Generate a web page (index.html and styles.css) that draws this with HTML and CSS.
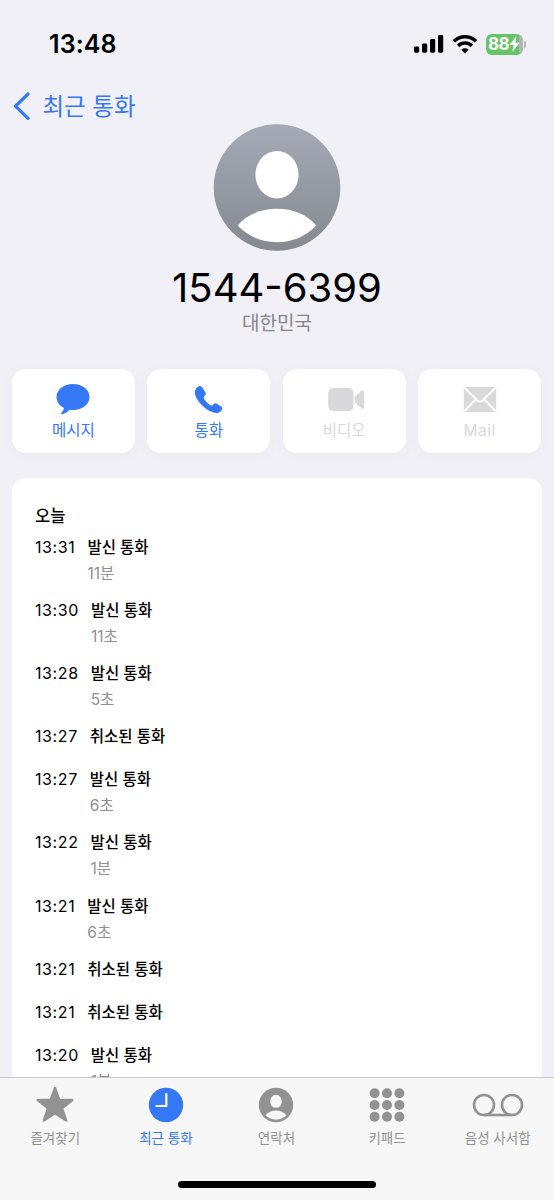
FILE: index.html
```html
<!DOCTYPE html>
<html lang="ko">
<head>
<meta charset="utf-8">
<title>최근 통화</title>
<link rel="stylesheet" href="styles.css">
</head>
<body>
<div class="phone">
  <header class="status">
    <span class="clock">13:48</span>
    <div class="status-icons">
      <svg class="signal" width="30" height="20" viewBox="0 0 30 20"><rect x="0" y="12.5" width="5.2" height="6.2" rx="1.4"/><rect x="8" y="9.5" width="5.2" height="9.2" rx="1.4"/><rect x="16" y="5" width="5.2" height="13.7" rx="1.4"/><rect x="24" y="1" width="5.2" height="17.7" rx="1.4"/></svg>
      <svg class="wifi" width="26" height="20" viewBox="0 0 26 20"><g fill="none" stroke="#000" stroke-width="3.5"><path d="M2 7.200a15.800 15.800 0 0 1 22 0"/><path d="M6.200 11.900a9.700 9.700 0 0 1 13.600 0"/></g><path d="M9.300 15.700a5.500 5.500 0 0 1 7.400 0L13 19.400z"/></svg>
      <div class="battery"><span>88</span><svg width="11" height="16" viewBox="0 0 11 16"><path d="M7.500 0 .3 9h4.500L3.200 16 10.800 6.700H6.300z" fill="#fff"/></svg></div><i class="battery-tip"></i>
    </div>
  </header>
  <nav class="back">
    <svg width="18" height="30" viewBox="0 0 18 30"><path d="M16 3 3.500 15.200 16 27.400" fill="none" stroke="#3478f6" stroke-width="3.200" stroke-linecap="round" stroke-linejoin="round"/></svg>
    <span>최근 통화</span>
  </nav>
  <section class="contact">
    <svg width="128" height="128" viewBox="0 0 128 128"><defs><linearGradient id="avatar" x1="0" y1="0" x2="0" y2="1"><stop offset="0" stop-color="#a5aab7"/><stop offset="1" stop-color="#858990"/></linearGradient></defs><circle cx="64" cy="64.500" r="63.300" fill="url(#avatar)"/><ellipse cx="64" cy="51.700" rx="21.600" ry="23.800" fill="#fff"/><path d="M24.800 102.500C34 91.500 48 85.800 64 85.800s30 5.700 39.200 16.700C93 113.500 79 119.200 64 119.200S35 113.500 24.800 102.500z" fill="#fff"/></svg>
    <h1>1544-6399</h1>
    <p>대한민국</p>
  </section>
  <section class="actions">
    <div class="action"><svg width="34" height="32" viewBox="0 0 34 32"><path d="M17 1C7.500 1 .5 6.800.5 14c0 4.900 3 8.800 7.500 11-.4 2-1.400 3.500-2.700 5-.6.8-.2 1.400.8 1.200 3.300-.6 5.600-2.300 7.500-4.500 1 .2 2.300.3 3.400.3 9.500 0 16.500-5.600 16.500-13S26.500 1 17 1z" fill="#3478f6"/></svg><span>메시지</span></div>
    <div class="action"><svg width="34" height="32" viewBox="0 0 34 32"><path d="M3.800 6C5 4.200 6.700 2.800 8.100 3c1.200.2 2.200 1.300 3.200 2.900l1.900 3c1 1.600.7 2.700-.5 3.900-1.200 1.200-1.200 2-.4 3.400 1.400 2.200 3.400 4.200 5.700 5.700 1.300.8 2.100.8 3.300-.4 1.200-1.300 2.400-1.500 3.900-.6l3.600 2.300c1.500 1 1.800 2.100 1.200 3.400-.9 1.700-2.600 3-4.500 3.300-5 .6-11-3.100-15.500-7.600C5.500 17.800.8 10.500 3.800 6z" fill="#3478f6"/></svg><span>통화</span></div>
    <div class="action off"><svg class="video" width="38" height="32" viewBox="0 0 38 32"><rect x="1.200" y="5" width="25.300" height="23" rx="5" fill="#d9d9dc"/><path d="M28 13.500l6.500-5.700c1.100-1 2.500-.5 2.500 1v15.400c0 1.500-1.400 2-2.500 1L28 19.500z" fill="#d9d9dc"/></svg><span>비디오</span></div>
    <div class="action off"><svg width="34" height="32" viewBox="0 0 34 32"><rect x=".8" y="4" width="32.400" height="25" rx="2.500" fill="#d9d9dc"/><path d="M1 4.500l13.500 13q2.500 2.300 5 0L33 4.500M1 28.500l11.700-12M33 28.500l-11.700-12" fill="none" stroke="#fff" stroke-width="2"/></svg><span class="mail">Mail</span></div>
  </section>
  <main class="log">
    <h2>오늘</h2>
    <div class="call"><time>13:31</time><div><b>발신 통화</b><small>11분</small></div></div>
    <div class="call"><time>13:30</time><div><b>발신 통화</b><small>11초</small></div></div>
    <div class="call"><time>13:28</time><div><b>발신 통화</b><small>5초</small></div></div>
    <div class="call"><time>13:27</time><div><b>취소된 통화</b></div></div>
    <div class="call"><time>13:27</time><div><b>발신 통화</b><small>6초</small></div></div>
    <div class="call"><time>13:22</time><div><b>발신 통화</b><small>1분</small></div></div>
    <div class="call"><time>13:21</time><div><b>발신 통화</b><small>6초</small></div></div>
    <div class="call"><time>13:21</time><div><b>취소된 통화</b></div></div>
    <div class="call"><time>13:21</time><div><b>취소된 통화</b></div></div>
    <div class="call"><time>13:20</time><div><b>발신 통화</b><small>1분</small></div></div>
  </main>
  <footer class="tabbar">
    <div class="tabs">
      <div class="tab"><svg width="40" height="38" viewBox="0 0 40 38"><path d="M20 3l4.300 12h13L27 23.200 31.200 35.500 20 28.300 8.800 35.500 13 23.200 2.700 15h13z" fill="#929292" stroke="#929292" stroke-width="2.400" stroke-linejoin="round"/></svg><span>즐겨찾기</span></div>
      <div class="tab on"><svg width="36" height="38" viewBox="0 0 36 38"><circle cx="18" cy="20" r="17.200" fill="#3478f6"/><path d="M18.300 9v12H8.500" fill="none" stroke="#fff" stroke-width="2.200" stroke-linecap="round" stroke-linejoin="round"/></svg><span>최근 통화</span></div>
      <div class="tab"><svg width="36" height="38" viewBox="0 0 36 38"><circle cx="18" cy="20" r="17.200" fill="#929292"/><ellipse cx="18" cy="16.300" rx="5.800" ry="6.500" fill="#f7f7f7"/><path d="M7.500 30.300C10 27.200 13.800 25.600 18 25.600s8 1.600 10.500 4.700C25.800 33 22 34.700 18 34.700S10.200 33 7.500 30.300z" fill="#f7f7f7"/></svg><span>연락처</span></div>
      <div class="tab"><svg width="36" height="38" viewBox="0 0 36 38" fill="#929292"><circle cx="5.600" cy="8.300" r="5"/><circle cx="18" cy="8.300" r="5"/><circle cx="30.400" cy="8.300" r="5"/><circle cx="5.600" cy="20" r="5"/><circle cx="18" cy="20" r="5"/><circle cx="30.400" cy="20" r="5"/><circle cx="5.600" cy="31.700" r="5"/><circle cx="18" cy="31.700" r="5"/><circle cx="30.400" cy="31.700" r="5"/></svg><span>키패드</span></div>
      <div class="tab"><svg width="52" height="38" viewBox="0 0 52 38" fill="none" stroke="#929292" stroke-width="2.600"><circle cx="12" cy="20" r="10"/><circle cx="40" cy="20" r="10"/><path d="M12 30h28"/></svg><span>음성 사서함</span></div>
    </div>
    <div class="home"></div>
  </footer>
</div>
</body>
</html>
```
FILE: styles.css
```css
* { box-sizing: border-box; }
body { margin: 0; }
.phone {
  width: 554px; height: 1200px; overflow: hidden;
  display: flex; flex-direction: column;
  background: #f1f0f6; color: #000;
  font-family: Inter, "Noto Sans CJK KR", sans-serif;
}
.status { height: 88px; flex: none; display: flex; justify-content: space-between; align-items: center; padding: 0 28.500px 0 49px; }
.clock { font-size: 25px; font-weight: 600; letter-spacing: .1px; }
.status-icons { display: flex; align-items: center; }
.wifi { margin-left: 8px; }
.battery {
  width: 37px; height: 21px; margin-left: 8px; border-radius: 6px;
  background: linear-gradient(90deg, #65c466 0 33px, #b3b3b6 33px);
  display: flex; align-items: center; justify-content: center;
  color: #fff; font-size: 17px; font-weight: 700; letter-spacing: -.5px;
}
.battery-tip { width: 2px; height: 7px; margin-left: 1px; border-radius: 0 2px 2px 0; background: #b3b3b6; }
.back { height: 35px; flex: none; display: flex; align-items: center; gap: 12.500px; padding-left: 12px; color: #3478f6; font-size: 23.500px; line-height: 35px; }
.back span { padding-top: 2px; }
.contact { height: 246px; flex: none; display: flex; flex-direction: column; align-items: center; }
.contact svg { display: block; flex: none; }
.contact h1 { margin: 12px 0 0; font-size: 40px; font-weight: 400; line-height: 49px; }
.contact p { margin: 0; font-size: 19px; line-height: 24px; color: #85858a; }
.actions { height: 84px; flex: none; display: grid; grid-template-columns: repeat(4, 1fr); gap: 12.500px; padding: 0 13px 0 12px; }
.action {
  display: flex; flex-direction: column; align-items: center; padding-top: 14px;
  border-radius: 14px; background: #fff; color: #3478f6; box-shadow: 0 2px 14px rgba(0, 0, 0, .035);
  font-size: 15.500px; line-height: 31px;
}
.off { color: #d9d9dc; }
.video { margin-left: 3px; }
.mail { letter-spacing: .5px; }
.log { margin: 25px 12px 0; height: 599px; flex: none; overflow: hidden; padding: 21.500px 23px 0; border-radius: 14px 14px 0 0; background: #fff; }
.log h2 { margin: 0; font-size: 16.500px; font-weight: 500; line-height: 32px; }
.call { display: flex; gap: 12px; padding-bottom: 12.200px; font-size: 15.500px; line-height: 31px; }
.call time { font-size: 16px; letter-spacing: .6px; }
.call b { display: block; font-weight: 500; }
.call small { display: block; padding-top: 1px; font-size: 15.500px; line-height: 19px; color: #909093; }
.tabbar { height: 123px; flex: none; border-top: 1px solid #c9c9cc; background: #f7f7f7; }
.tabs { display: grid; grid-template-columns: repeat(5, 1fr); height: 102px; padding: 7px 1px 0 0; }
.tab { display: flex; flex-direction: column; align-items: center; color: #929292; font-size: 13.500px; line-height: 30px; }
.on { color: #3478f6; }
.home { width: 198px; height: 7px; margin: 1px auto 0; border-radius: 4px; background: #000; }
```
